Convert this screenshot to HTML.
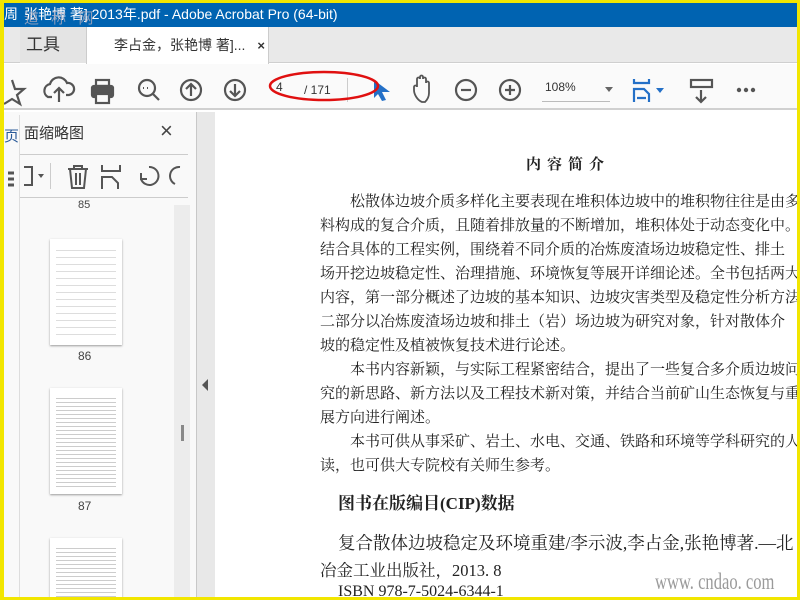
<!DOCTYPE html>
<html><head><meta charset="utf-8"><style>
*{margin:0;padding:0;box-sizing:border-box}
body{width:800px;height:600px;overflow:hidden;background:#f2e600;position:relative;font-family:"Liberation Sans","Noto Sans CJK SC",sans-serif}
.a{position:absolute}
.serif{font-family:"Liberation Serif","Noto Serif CJK SC",serif;white-space:nowrap;color:#222}
svg{position:absolute}
</style></head><body>
<div class="a" style="left:4px;top:3px;width:793px;height:594px;background:#fff;overflow:hidden">
 <div class="a" style="left:0;top:0;width:793px;height:24px;background:#0063b1;color:#fff;font-size:14px;line-height:22px;padding-left:20px;white-space:nowrap">张艳博 著] 2013年.pdf - Adobe Acrobat Pro (64-bit)</div>
 <div class="a" style="left:0;top:2px;font-size:14px;color:#fff;line-height:18px">周</div>
 <div class="a" style="left:20px;top:4px;font-size:15px;color:rgba(170,170,190,.8);letter-spacing:4px">道 称 网</div>
 <div class="a" style="left:0;top:24px;width:793px;height:36px;background:#e9e9e9;border-bottom:1px solid #cfcfcf"></div>
 <div class="a" style="left:16px;top:24px;width:66px;height:36px;background:#e4e4e4;font-size:17px;color:#333;line-height:36px;padding-left:6px">工具</div>
 <div class="a" style="left:82px;top:24px;width:183px;height:37px;background:#fff;border-left:1px solid #ccc;border-right:1px solid #ccc;font-size:14px;color:#333;line-height:36px;padding-left:27px">李占金，张艳博 著]... <span style="margin-left:8px;font-weight:bold;font-size:13px">×</span></div>
 <div class="a" style="left:0;top:61px;width:793px;height:46px;background:#fafafa;border-bottom:2px solid #d0d0d0"></div>
 <svg width="793" height="48" style="left:0;top:61px" fill="none" stroke="#555" stroke-width="2.2">
  <path d="M8 16 L11 25 L20 25 L13 31 L16 40 L8 35 L0 40" />
  <path d="M48 33 H44 a7 7 0 0 1 2 -13 a9 9 0 0 1 17 -1 a6 6 0 0 1 2 12 H62 M55 38 V24 M50 29 l5 -5 5 5"/>
  <rect x="88" y="22" width="21" height="11" rx="2" fill="#555"/><rect x="92" y="16" width="13" height="6"/><rect x="92" y="30" width="13" height="9" fill="#fafafa"/>
  <circle cx="143" cy="24" r="8"/><path d="M149 30 l6 6"/><path d="M139 24h1M143 24h1M147 24h0" stroke-width="2"/>
  <circle cx="187" cy="26" r="10"/><path d="M187 32 V20 M182 25 l5 -5 5 5"/>
  <circle cx="231" cy="26" r="10"/><path d="M231 20 V32 M226 27 l5 5 5 -5"/>
  <path d="M418 38 c-5 -2 -8 -8 -8 -12 v-3 c0 -2 3 -2 3 0 v-8 c0 -2 3 -2 3 0 v-2 c0 -2 3 -2 3 0 v2 c0 -2 3 -2 3 0 v4 c0 -2 3 -2 3 0 v10 c0 4 -2 7 -4 9z" stroke-width="1.8"/>
  <circle cx="462" cy="26" r="10"/><path d="M457 26 h10"/>
  <circle cx="506" cy="26" r="10"/><path d="M501 26 h10 M506 21 v10"/>
  <path d="M601 23 l4 5 4 -5z" fill="#666" stroke="none"/>
  <g stroke="#2470c7"><path d="M630 15 v4 h15 v-4 M630 38 v-13 h10 l5 5 v8 M633 34 h9"/></g>
  <path d="M652 24 l4 5 4 -5z" fill="#2470c7" stroke="none"/>
  <rect x="687" y="16" width="21" height="7"/><path d="M697 26 v12 M692 33 l5 5 5 -5"/>
  <g fill="#555" stroke="none"><circle cx="735" cy="26" r="2.2"/><circle cx="742" cy="26" r="2.2"/><circle cx="749" cy="26" r="2.2"/></g>
 </svg>
 <div class="a" style="left:272px;top:77px;font-size:12px;color:#333">4</div>
 <div class="a" style="left:288px;top:75px;width:56px;height:24px;border-right:1px solid #ccc;font-size:12px;color:#333;line-height:24px;padding-left:12px">/ 171</div>
 <div class="a" style="left:541px;top:77px;font-size:12px;color:#333">108%</div>
 <div class="a" style="left:538px;top:98px;width:68px;height:1px;background:#bbb"></div>
 <svg width="30" height="30" style="left:364px;top:73px"><path d="M6 4 L22 16 L14 16 L18 24 L14 25 L10 18 L6 22z" fill="#2470c7"/></svg>
 <svg width="120" height="50" style="left:262px;top:62px"><ellipse cx="58" cy="21" rx="54" ry="14" fill="none" stroke="#e01010" stroke-width="2.5"/></svg>
 <div class="a" style="left:0;top:109px;width:192px;height:485px;background:#f9f9f9"></div>
 <div class="a" style="left:0;top:112px;width:16px;height:485px;background:#f9f9f9;border-right:1px solid #ddd"></div>
 <div class="a" style="left:0;top:122px;font-size:15px;color:#2a5a99">页</div>
 <div class="a" style="left:20px;top:119px;font-size:15px;color:#333">面缩略图</div>
 <div class="a" style="left:156px;top:115px;font-size:22px;color:#444">×</div>
 <div class="a" style="left:16px;top:151px;width:168px;height:1px;background:#ccc"></div>
 <div class="a" style="left:16px;top:194px;width:168px;height:1px;background:#ccc"></div>
 <div class="a" style="left:46px;top:160px;width:1px;height:26px;background:#ccc"></div>
 <svg width="190" height="40" style="left:0;top:152px" fill="none" stroke="#555" stroke-width="2">
  <path d="M4 18h6M4 24h6M4 30h6" stroke-width="3"/><path d="M20 12h8v18h-8"/><path d="M34 19l3 4 3 -4z" fill="#555" stroke="none"/>
  <path d="M64 14h20M70 14v-3h8v3M66 14l2 19h12l2 -19M72 18v12M76 18v12"/>
  <path d="M98 10v6h18v-6M98 34v-12h10l6 6v6"/>
  <path d="M145 12a9 9 0 1 1 -8 12M137 18v6h6"/>
  <path d="M176 12a9 9 0 0 0 -5 17"/>
 </svg>
 <div class="a" style="left:74px;top:196px;font-size:11px;color:#444">85</div>
 <div class="a" style="left:170px;top:202px;width:16px;height:392px;background:#ececec"></div>
 <div class="a" style="left:177px;top:422px;width:3px;height:16px;background:#888"></div>
 <div class="a" style="left:46px;top:236px;width:72px;height:106px;background:#fff;box-shadow:0 1px 2px #999"></div>
 <div class="a" style="left:74px;top:346px;font-size:12px;color:#444">86</div>
 <div class="a" style="left:46px;top:385px;width:72px;height:106px;background:#fff;box-shadow:0 1px 2px #999"></div>
 <div class="a" style="left:74px;top:496px;font-size:12px;color:#444">87</div>
 <div class="a" style="left:46px;top:535px;width:72px;height:70px;background:#fff;box-shadow:0 1px 2px #999"></div>
 <div class="a" style="left:52px;top:244px;width:60px;height:94px;background:repeating-linear-gradient(#fff 0 3px,#ddd 3px 4px,#fff 4px 7px)"></div>
 <div class="a" style="left:52px;top:393px;width:60px;height:94px;background:repeating-linear-gradient(#fff 0 2px,#ccc 2px 3px,#fff 3px 4px)"></div>
 <div class="a" style="left:52px;top:543px;width:60px;height:60px;background:repeating-linear-gradient(#fff 0 2px,#ccc 2px 3px,#fff 3px 4px)"></div>
 <div class="a" style="left:192px;top:109px;width:19px;height:485px;background:#e8e8e8;border-left:1px solid #c8c8c8"></div>
 <div class="a" style="left:198px;top:376px;width:0;height:0;border-top:6px solid transparent;border-bottom:6px solid transparent;border-right:6px solid #555"></div>
 <div class="a serif" style="left:522px;top:150px;font-size:15px;font-weight:bold;letter-spacing:6px">内容简介</div>
 <div class="a serif" style="left:316px;top:187px;font-size:15px;line-height:24px">
  <div style="padding-left:30px">松散体边坡介质多样化主要表现在堆积体边坡中的堆积物往往是由多</div>
  <div>料构成的复合介质，且随着排放量的不断增加，堆积体处于动态变化中。</div>
  <div>结合具体的工程实例，围绕着不同介质的冶炼废渣场边坡稳定性、排土</div>
  <div>场开挖边坡稳定性、治理措施、环境恢复等展开详细论述。全书包括两大</div>
  <div>内容，第一部分概述了边坡的基本知识、边坡灾害类型及稳定性分析方法</div>
  <div>二部分以冶炼废渣场边坡和排土（岩）场边坡为研究对象，针对散体介</div>
  <div>坡的稳定性及植被恢复技术进行论述。</div>
  <div style="padding-left:30px">本书内容新颖，与实际工程紧密结合，提出了一些复合多介质边坡问</div>
  <div>究的新思路、新方法以及工程技术新对策，并结合当前矿山生态恢复与重</div>
  <div>展方向进行阐述。</div>
  <div style="padding-left:30px">本书可供从事采矿、岩土、水电、交通、铁路和环境等学科研究的人</div>
  <div>读，也可供大专院校有关师生参考。</div>
 </div>
 <div class="a serif" style="left:334px;top:486px;font-size:17px;font-weight:bold">图书在版编目(CIP)数据</div>
 <div class="a serif" style="left:334px;top:527px;font-size:17.5px">复合散体边坡稳定及环境重建/李示波,李占金,张艳博著.—北</div>
 <div class="a serif" style="left:316px;top:554px;font-size:16.5px">冶金工业出版社，2013. 8</div>
 <div class="a serif" style="left:334px;top:580px;font-size:16px">ISBN 978-7-5024-6344-1</div>
 <div class="a serif" style="left:651px;top:566px;font-size:23px;color:#9a9a9a;transform:scaleX(.72);transform-origin:left">www. cndao. com</div>
</div>
</body></html>
